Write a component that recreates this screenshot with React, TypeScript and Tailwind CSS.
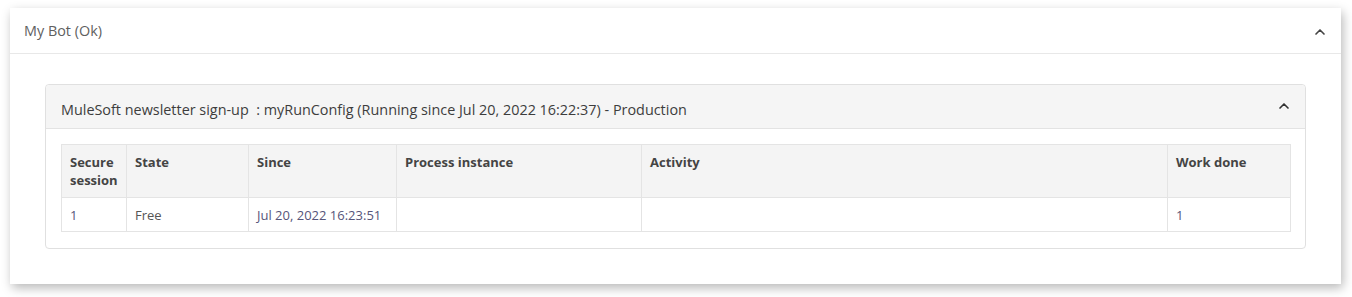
import { ChevronUp } from "lucide-react";

const cols = [
  { label: "Secure session", w: "w-[65px]", value: "1", tone: "text-[#56557a]" },
  { label: "State", w: "w-[122px]", value: "Free", tone: "text-[#555]" },
  { label: "Since", w: "w-[148px]", value: "Jul 20, 2022 16:23:51", tone: "text-[#56557a]" },
  { label: "Process instance", w: "w-[245px]", value: "", tone: "text-[#555]" },
  { label: "Activity", w: "w-[526px]", value: "", tone: "text-[#555]" },
  { label: "Work done", w: "w-[123px]", value: "1", tone: "text-[#56557a]" },
];

export default function App() {
  return (
    <div
      className="bg-white pt-[8px] pl-[10px] pr-[11px] pb-[13px]"
      style={{ fontFamily: '"Open Sans", "Noto Sans", sans-serif' }}
    >
      <div className="bg-white shadow-[2px_4px_10px_rgba(0,0,0,0.28)]">
        {/* top card header */}
        <div className="flex items-center justify-between h-[46px] px-[14px] border-b border-[#e8e8e8]">
          <span className="text-[14.4px] text-[#5f5f5f] mt-[1px]">My Bot (Ok)</span>
          <ChevronUp className="h-4 w-4 text-[#444] mr-[-1px] mt-[3px]" strokeWidth={2.5} />
        </div>

        <div className="px-[35px] pt-[30px] pb-[35px]">
          <div className="border border-[#e0e0e0] rounded-[4px]">
            <div className="flex items-center justify-between h-[44px] px-[15px] bg-[#f5f5f5] border-b border-[#e3e3e3] rounded-t-[4px]">
              <span className="text-[14.4px] text-[#3d3d3d] mt-[7px]">
                MuleSoft newsletter sign-up &nbsp;: myRunConfig (Running since Jul 20, 2022 16:22:37) - Production
              </span>
              <ChevronUp className="h-4 w-4 text-[#333] mt-[-2px] mr-[-2px]" strokeWidth={2.5} />
            </div>
            <div className="px-[15px] pt-[15px] pb-[16px]">
              <table className="w-full table-fixed border-collapse text-[13px]">
                <thead>
                  <tr className="bg-[#f4f4f4]">
                    {cols.map((c) => (
                      <th
                        key={c.label}
                        className={`${c.w} border border-[#e4e4e4] px-[8px] pt-[8px] pb-[8px] h-[53px] align-top text-left font-bold text-[#444] leading-[18px]`}
                      >
                        {c.label}
                      </th>
                    ))}
                  </tr>
                </thead>
                <tbody>
                  <tr>
                    {cols.map((c) => (
                      <td
                        key={c.label}
                        className={`border border-[#e4e4e4] px-[8px] h-[34px] leading-[18px] ${c.tone}`}
                      >
                        {c.value}
                      </td>
                    ))}
                  </tr>
                </tbody>
              </table>
            </div>
          </div>
        </div>
      </div>
    </div>
  );
}
